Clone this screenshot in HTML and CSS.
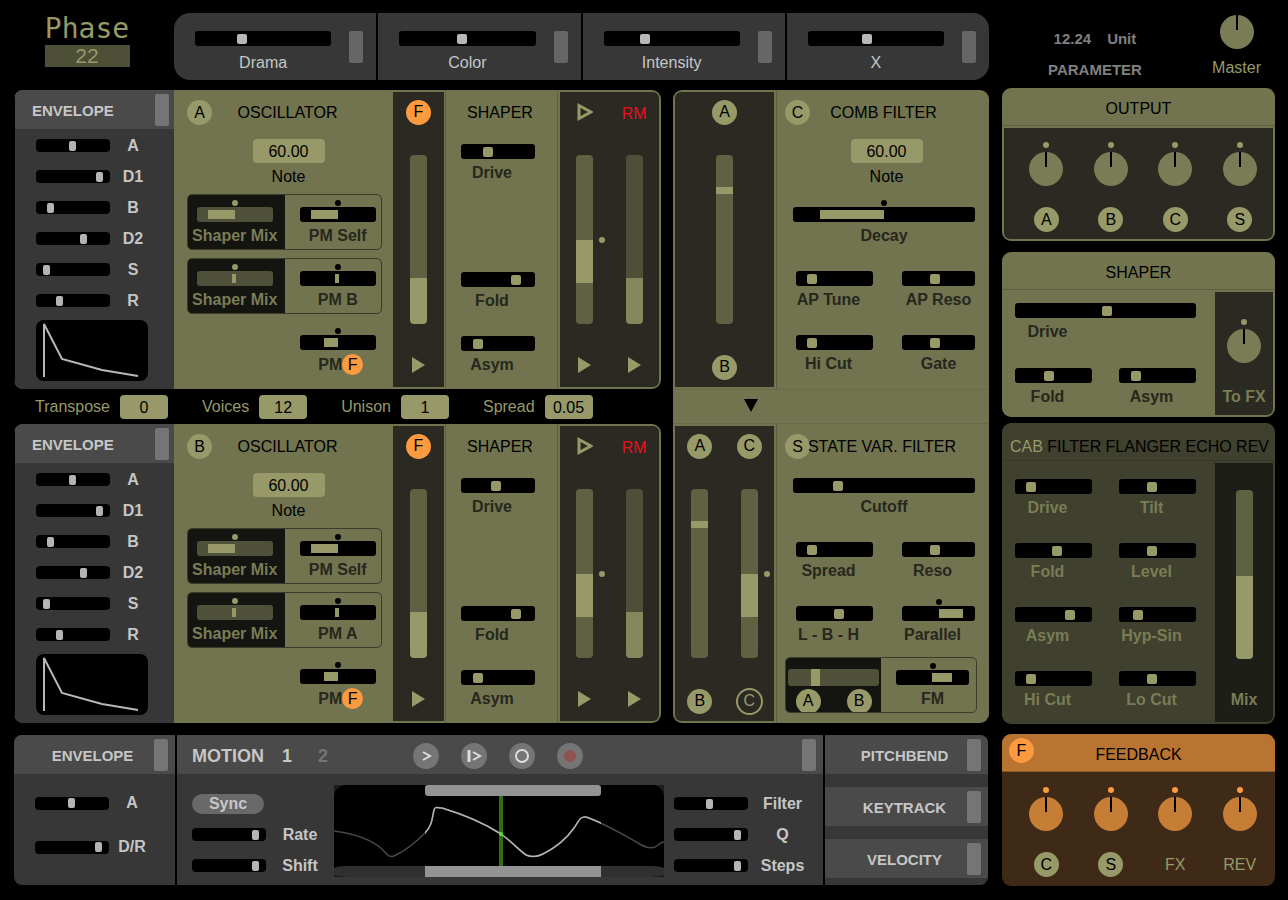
FILE: index.html
```html
<!DOCTYPE html>
<html lang="en">
<head>
    <meta charset="UTF-8">
    <meta name="viewport" content="width=device-width, initial-scale=1.0">
    <title>Phase 22</title>
    <link rel="stylesheet" href="styles.css">
</head>
<body>
    <div class="synth">
        <main class="main">
            <header class="top">
                <div class="logo">
                    <h1>Phase</h1>
                    <span>22</span>
                </div>
                <div class="macros">
                    <div class="macro">
                        <label><input type="range" value="33"><span>Drama</span></label>
                        <button class="toggle" aria-label="Drama modulation"></button>
                    </div>
                    <div class="macro">
                        <label><input type="range" value="46"><span>Color</span></label>
                        <button class="toggle" aria-label="Color modulation"></button>
                    </div>
                    <div class="macro">
                        <label><input type="range" value="29"><span>Intensity</span></label>
                        <button class="toggle" aria-label="Intensity modulation"></button>
                    </div>
                    <div class="macro">
                        <label><input type="range" value="43"><span>X</span></label>
                        <button class="toggle" aria-label="X modulation"></button>
                    </div>
                </div>
            </header>

            <div class="middle">
                <div class="voices">
                    <!-- Oscillator A -->
                    <section class="voice">
                        <div class="envelope">
                            <div class="bar"><h2>ENVELOPE</h2><button class="toggle" aria-label="Envelope A modulation"></button></div>
                            <div class="env-rows">
                                <label class="row"><input type="range" value="49"><span>A</span></label>
                                <label class="row"><input type="range" value="89"><span>D1</span></label>
                                <label class="row"><input type="range" value="16"><span>B</span></label>
                                <label class="row"><input type="range" value="66"><span>D2</span></label>
                                <label class="row"><input type="range" value="10"><span>S</span></label>
                                <label class="row"><input type="range" value="30"><span>R</span></label>
                            </div>
                            <svg class="env-graph" viewBox="0 0 112 61"><path d="M8 57V4L26 39L66 50L102 56"/></svg>
                        </div>
                        <div class="osc">
                            <div class="head"><span class="badge">A</span><h2>OSCILLATOR</h2></div>
                            <label class="note"><input type="text" value="60.00"><span>Note</span></label>
                            <div class="pairs">
                                <div class="pair">
                                    <label class="ctl off"><i class="dot"></i><input class="fill" type="range" value="15" style="--from: 15%; --to: 50%"><span>Shaper Mix</span></label>
                                    <label class="ctl"><i class="dot"></i><input class="fill" type="range" value="15" style="--from: 15%; --to: 50%"><span>PM Self</span></label>
                                </div>
                                <div class="pair">
                                    <label class="ctl off"><i class="dot"></i><input class="fill" type="range" value="50" style="--from: 46%; --to: 51%"><span>Shaper Mix</span></label>
                                    <label class="ctl"><i class="dot"></i><input class="fill" type="range" value="50" style="--from: 46%; --to: 51%"><span>PM B</span></label>
                                </div>
                                <div class="pair single">
                                    <label class="ctl"><i class="dot"></i><input class="fill" type="range" value="32" style="--from: 32%; --to: 50%"><span>PM<b class="badge small orange">F</b></span></label>
                                </div>
                            </div>
                        </div>
                        <div class="well send">
                            <div class="lane">
                                <span class="badge orange">F</span>
                                <input class="vert" type="range" value="27" style="--from: 0%; --to: 27%" aria-label="Feedback to A">
                                <svg class="arrow" viewBox="0 0 13 16"><path d="M0 0L13 8L0 16z"/></svg>
                            </div>
                        </div>
                        <div class="shaper">
                            <div class="head"><h2>SHAPER</h2></div>
                            <div class="ctls">
                                <label class="ctl"><input type="range" value="34"><span>Drive</span></label>
                                <label class="ctl low"><input type="range" value="78"><span>Fold</span></label>
                                <label class="ctl"><input type="range" value="18"><span>Asym</span></label>
                            </div>
                        </div>
                        <div class="well ring">
                            <div class="lane">
                                <svg class="play" viewBox="0 0 16 18"><path d="M2 2.500L14 9L2 15.500z"/></svg>
                                <span class="vbox"><input class="vert" type="range" value="25" style="--from: 24%; --to: 50%" aria-label="Direct level A"><i class="dot"></i></span>
                                <svg class="arrow" viewBox="0 0 13 16"><path d="M0 0L13 8L0 16z"/></svg>
                            </div>
                            <div class="lane dim">
                                <span class="rm">RM</span>
                                <input class="vert" type="range" value="27" style="--from: 0%; --to: 27%" aria-label="Ring modulation A">
                                <svg class="arrow" viewBox="0 0 13 16"><path d="M0 0L13 8L0 16z"/></svg>
                            </div>
                        </div>
                    </section>

                    <div class="globals">
                        <label><span>Transpose</span><input type="text" value="0"></label>
                        <label><span>Voices</span><input type="text" value="12"></label>
                        <label><span>Unison</span><input type="text" value="1"></label>
                        <label><span>Spread</span><input type="text" value="0.05"></label>
                    </div>

                    <!-- Oscillator B -->
                    <section class="voice">
                        <div class="envelope">
                            <div class="bar"><h2>ENVELOPE</h2><button class="toggle" aria-label="Envelope B modulation"></button></div>
                            <div class="env-rows">
                                <label class="row"><input type="range" value="49"><span>A</span></label>
                                <label class="row"><input type="range" value="89"><span>D1</span></label>
                                <label class="row"><input type="range" value="16"><span>B</span></label>
                                <label class="row"><input type="range" value="66"><span>D2</span></label>
                                <label class="row"><input type="range" value="10"><span>S</span></label>
                                <label class="row"><input type="range" value="30"><span>R</span></label>
                            </div>
                            <svg class="env-graph" viewBox="0 0 112 61"><path d="M8 57V4L26 39L66 50L102 56"/></svg>
                        </div>
                        <div class="osc">
                            <div class="head"><span class="badge">B</span><h2>OSCILLATOR</h2></div>
                            <label class="note"><input type="text" value="60.00"><span>Note</span></label>
                            <div class="pairs">
                                <div class="pair">
                                    <label class="ctl off"><i class="dot"></i><input class="fill" type="range" value="15" style="--from: 15%; --to: 50%"><span>Shaper Mix</span></label>
                                    <label class="ctl"><i class="dot"></i><input class="fill" type="range" value="15" style="--from: 15%; --to: 50%"><span>PM Self</span></label>
                                </div>
                                <div class="pair">
                                    <label class="ctl off"><i class="dot"></i><input class="fill" type="range" value="50" style="--from: 46%; --to: 51%"><span>Shaper Mix</span></label>
                                    <label class="ctl"><i class="dot"></i><input class="fill" type="range" value="50" style="--from: 46%; --to: 51%"><span>PM A</span></label>
                                </div>
                                <div class="pair single">
                                    <label class="ctl"><i class="dot"></i><input class="fill" type="range" value="32" style="--from: 32%; --to: 50%"><span>PM<b class="badge small orange">F</b></span></label>
                                </div>
                            </div>
                        </div>
                        <div class="well send">
                            <div class="lane">
                                <span class="badge orange">F</span>
                                <input class="vert" type="range" value="27" style="--from: 0%; --to: 27%" aria-label="Feedback to B">
                                <svg class="arrow" viewBox="0 0 13 16"><path d="M0 0L13 8L0 16z"/></svg>
                            </div>
                        </div>
                        <div class="shaper">
                            <div class="head"><h2>SHAPER</h2></div>
                            <div class="ctls">
                                <label class="ctl"><input type="range" value="47"><span>Drive</span></label>
                                <label class="ctl low"><input type="range" value="78"><span>Fold</span></label>
                                <label class="ctl"><input type="range" value="18"><span>Asym</span></label>
                            </div>
                        </div>
                        <div class="well ring">
                            <div class="lane">
                                <svg class="play" viewBox="0 0 16 18"><path d="M2 2.500L14 9L2 15.500z"/></svg>
                                <span class="vbox"><input class="vert" type="range" value="25" style="--from: 24%; --to: 50%" aria-label="Direct level B"><i class="dot"></i></span>
                                <svg class="arrow" viewBox="0 0 13 16"><path d="M0 0L13 8L0 16z"/></svg>
                            </div>
                            <div class="lane dim">
                                <span class="rm">RM</span>
                                <input class="vert" type="range" value="27" style="--from: 0%; --to: 27%" aria-label="Ring modulation B">
                                <svg class="arrow" viewBox="0 0 13 16"><path d="M0 0L13 8L0 16z"/></svg>
                            </div>
                        </div>
                    </section>
                </div>

                <!-- Filters -->
                <section class="filters">
                    <div class="filter">
                        <div class="well">
                            <div class="lane">
                                <span class="badge">A</span>
                                <input class="vert" type="range" value="78" style="--from: 77%; --to: 81%" aria-label="Comb input mix">
                                <span class="badge">B</span>
                            </div>
                        </div>
                        <div class="filter-body">
                            <div class="head"><span class="badge">C</span><h2>COMB FILTER</h2></div>
                            <label class="note"><input type="text" value="60.00"><span>Note</span></label>
                            <div class="ctls comb">
                                <label class="ctl wide"><i class="dot"></i><input class="fill" type="range" value="15" style="--from: 15%; --to: 50%"><span>Decay</span></label>
                                <label class="ctl"><input type="range" value="17"><span>AP Tune</span></label>
                                <label class="ctl mid"><input type="range" value="44"><span>AP Reso</span></label>
                                <label class="ctl"><input type="range" value="17"><span>Hi Cut</span></label>
                                <label class="ctl mid"><input type="range" value="44"><span>Gate</span></label>
                            </div>
                        </div>
                    </div>
                    <div class="link">
                        <svg viewBox="0 0 14 13"><path d="M0 0H14L7 13z"/></svg>
                    </div>
                    <div class="filter">
                        <div class="well">
                            <div class="lane">
                                <span class="badge">A</span>
                                <input class="vert" type="range" value="78" style="--from: 77%; --to: 81%" aria-label="State filter input mix">
                                <span class="badge">B</span>
                            </div>
                            <div class="lane">
                                <span class="badge">C</span>
                                <span class="vbox"><input class="vert" type="range" value="24" style="--from: 24%; --to: 50%" aria-label="Comb to state filter"><i class="dot"></i></span>
                                <span class="badge outline">C</span>
                            </div>
                        </div>
                        <div class="filter-body">
                            <div class="head"><span class="badge">S</span><h2>STATE VAR. FILTER</h2></div>
                            <div class="ctls state">
                                <label class="ctl wide"><input type="range" value="23"><span>Cutoff</span></label>
                                <label class="ctl"><input type="range" value="17"><span>Spread</span></label>
                                <label class="ctl"><input type="range" value="44"><span>Reso</span></label>
                                <label class="ctl"><input type="range" value="56"><span>L - B - H</span></label>
                                <label class="ctl"><i class="dot"></i><input class="fill" type="range" value="84" style="--from: 51%; --to: 84%"><span>Parallel</span></label>
                            </div>
                            <div class="pair">
                                <label class="ctl off ab"><input class="fill" type="range" value="30" style="--from: 25%; --to: 35%"><span><b class="badge">A</b><b class="badge">B</b></span></label>
                                <label class="ctl"><i class="dot"></i><input class="fill" type="range" value="77" style="--from: 49%; --to: 77%"><span>FM</span></label>
                            </div>
                        </div>
                    </div>
                </section>
            </div>

            <!-- Modulation -->
            <footer class="mods">
                <section class="mod-env">
                    <div class="bar"><h2>ENVELOPE</h2><button class="toggle" aria-label="Modulation envelope"></button></div>
                    <div class="env-rows">
                        <label class="row"><input type="range" value="49"><span>A</span></label>
                        <label class="row"><input type="range" value="90"><span>D/R</span></label>
                    </div>
                </section>
                <section class="motion">
                    <div class="bar">
                        <h2>MOTION</h2>
                        <div class="pages">
                            <button class="active">1</button>
                            <button>2</button>
                        </div>
                        <div class="transport">
                            <button aria-label="Play"><svg viewBox="0 0 26 26"><path d="M10 9L17 13L10 17"/></svg></button>
                            <button aria-label="Step"><svg viewBox="0 0 26 26"><path d="M8 7V19" stroke-width="3"/><path d="M12 9L19 13L12 17"/></svg></button>
                            <button aria-label="Loop"><svg viewBox="0 0 26 26"><circle cx="13" cy="13" r="6"/></svg></button>
                            <button aria-label="Record" class="record"><svg viewBox="0 0 26 26"><circle cx="13" cy="13" r="6"/></svg></button>
                        </div>
                        <button class="toggle" aria-label="Motion modulation"></button>
                    </div>
                    <div class="motion-body">
                        <div class="motion-rows">
                            <button class="sync">Sync</button>
                            <label class="row"><input type="range" value="90"><span>Rate</span></label>
                            <label class="row"><input type="range" value="89"><span>Shift</span></label>
                        </div>
                        <svg class="wave" viewBox="0 0 330 92" preserveAspectRatio="none">
                            <defs>
                                <clipPath id="range"><rect x="91" y="0" width="176" height="92"/></clipPath>
                                <path id="curve" d="M0 46C22 49 38 55 48 64C53 69 54 73 60 71C71 66 82 57 91 48C99 39 98 33 100 25C101 21 104 23 108 23C128 29 150 38 167 49C178 57 186 66 192 70C197 72 203 72 209 69C221 63 233 53 240 43C245 36 246 31 252 32C270 38 288 49 304 58C312 63 319 65 324 60Q327 57 330 57"/>
                            </defs>
                            <rect width="330" height="92" rx="12"/>
                            <path class="floor" d="M0 83Q4 81 12 81H318Q326 81 330 83V90L318 92H12L0 90z"/>
                            <rect class="grip" x="91" y="0" width="176" height="11" rx="3"/>
                            <rect class="grip" x="91" y="81" width="176" height="11"/>
                            <rect class="playhead" x="165" y="11" width="4" height="70"/>
                            <use class="curve-dim" href="#curve"/>
                            <use class="curve-lit" href="#curve" clip-path="url(#range)"/>
                            <circle class="spot" cx="167" cy="49" r="2"/>
                        </svg>
                        <div class="motion-rows">
                            <label class="row"><input type="range" value="48"><span>Filter</span></label>
                            <label class="row"><input type="range" value="89"><span>Q</span></label>
                            <label class="row"><input type="range" value="89"><span>Steps</span></label>
                        </div>
                    </div>
                </section>
                <section class="sources">
                    <div class="bar"><h2>PITCHBEND</h2><button class="toggle" aria-label="Pitchbend modulation"></button></div>
                    <div class="bar"><h2>KEYTRACK</h2><button class="toggle" aria-label="Keytrack modulation"></button></div>
                    <div class="bar"><h2>VELOCITY</h2><button class="toggle" aria-label="Velocity modulation"></button></div>
                </section>
            </footer>
        </main>

        <aside class="side">
            <div class="readout">
                <div class="param">
                    <p><span>12.24</span><span>Unit</span></p>
                    <p>PARAMETER</p>
                </div>
                <label class="master"><input class="knob" type="range"><span>Master</span></label>
            </div>

            <section class="panel output">
                <h2>OUTPUT</h2>
                <div class="well knobs">
                    <label><i class="dot"></i><input class="knob" type="range"><span class="badge">A</span></label>
                    <label><i class="dot"></i><input class="knob" type="range"><span class="badge">B</span></label>
                    <label><i class="dot"></i><input class="knob" type="range"><span class="badge">C</span></label>
                    <label><i class="dot"></i><input class="knob" type="range"><span class="badge">S</span></label>
                </div>
            </section>

            <section class="panel side-shaper">
                <h2>SHAPER</h2>
                <div class="split">
                    <div class="ctls">
                        <label class="ctl wide"><input type="range" value="51"><span>Drive</span></label>
                        <label class="ctl"><input type="range" value="43"><span>Fold</span></label>
                        <label class="ctl"><input type="range" value="18"><span>Asym</span></label>
                    </div>
                    <label class="well tofx"><i class="dot"></i><input class="knob" type="range"><span>To FX</span></label>
                </div>
            </section>

            <section class="panel fx">
                <nav>
                    <button class="active">CAB</button>
                    <button>FILTER</button>
                    <button>FLANGER</button>
                    <button>ECHO</button>
                    <button>REV</button>
                </nav>
                <div class="split">
                    <div class="ctls">
                        <label class="ctl"><input type="range" value="17"><span>Drive</span></label>
                        <label class="ctl"><input type="range" value="42"><span>Tilt</span></label>
                        <label class="ctl"><input type="range" value="55"><span>Fold</span></label>
                        <label class="ctl"><input type="range" value="42"><span>Level</span></label>
                        <label class="ctl"><input type="range" value="74"><span>Asym</span></label>
                        <label class="ctl"><input type="range" value="21"><span>Hyp-Sin</span></label>
                        <label class="ctl"><input type="range" value="17"><span>Hi Cut</span></label>
                        <label class="ctl"><input type="range" value="42"><span>Lo Cut</span></label>
                    </div>
                    <label class="well mix"><input class="vert" type="range" value="49" style="--from: 0%; --to: 49%"><span>Mix</span></label>
                </div>
            </section>

            <section class="panel feedback">
                <h2><span class="badge orange">F</span>FEEDBACK</h2>
                <div class="knobs">
                    <label><i class="dot"></i><input class="knob" type="range"><span class="badge">C</span></label>
                    <label><i class="dot"></i><input class="knob" type="range"><span class="badge">S</span></label>
                    <label><i class="dot"></i><input class="knob" type="range"><span>FX</span></label>
                    <label><i class="dot"></i><input class="knob" type="range"><span>REV</span></label>
                </div>
            </section>
        </aside>
    </div>
</body>
</html>
```
FILE: styles.css
```css
:root {
    --olive: #71744f;
    --olive-line: #5c5f42;
    --light: #979969;
    --well: #2a2a22;
    --grey: #373737;
    --grey-bar: #4a4a4a;
    --grey-text: #c6c6c6;
    --orange: #fc9a3f;
}

* {
    box-sizing: border-box;
}

body {
    margin: 0;
    background: #000;
    font-family: "Liberation Sans", Arial, sans-serif;
    font-size: 16px;
    line-height: 20px;
    color: #000;
}

h1, h2, p {
    margin: 0;
    font-size: 16px;
    font-weight: normal;
}

button {
    padding: 0;
    border: none;
    background: none;
    font: inherit;
    color: inherit;
    cursor: pointer;
}

input {
    margin: 0;
    min-width: 0;
}

input[type="text"] {
    height: 24px;
    padding: 2px 0 0;
    border: none;
    border-radius: 4px;
    background: var(--light);
    font: inherit;
    color: #000;
    text-align: center;
}

/* sliders */
input[type="range"] {
    appearance: none;
    display: block;
    width: 100%;
    height: 15px;
    border-radius: 3px;
    background: #000;
    cursor: pointer;
}

input[type="range"]::-webkit-slider-thumb {
    appearance: none;
    width: 10px;
    height: 10px;
    border-radius: 2px;
    background: var(--light);
}

input.fill::-webkit-slider-thumb,
input.vert::-webkit-slider-thumb,
input.knob::-webkit-slider-thumb {
    opacity: 0;
}

input[type="range"].fill {
    background: linear-gradient(90deg, transparent var(--from), var(--light) var(--from), var(--light) var(--to), transparent var(--to)) center / 100% 9px no-repeat, #000;
}

input[type="range"].vert {
    writing-mode: vertical-lr;
    direction: rtl;
    width: 17px;
    height: 169px;
    border-radius: 4px;
    background: linear-gradient(0deg, transparent var(--from), var(--light) var(--from), var(--light) var(--to), transparent var(--to)), #5e6142;
}

input[type="range"].knob {
    width: 34px;
    height: 34px;
    border-radius: 50%;
    background: linear-gradient(#000, #000) center top / 2px 15px no-repeat, #7a7c56;
}

.toggle {
    flex: none;
    width: 14px;
    height: 32px;
    border-radius: 2px;
    background: #757575;
}

.badge {
    display: flex;
    flex: none;
    align-items: center;
    justify-content: center;
    width: 25px;
    height: 25px;
    border-radius: 50%;
    background: var(--light);
    font-weight: normal;
    color: #000;
}

.badge.small {
    width: 21px;
    height: 21px;
}

.badge.orange {
    background: var(--orange);
}

.badge.outline {
    width: 27px;
    height: 27px;
    border: 2px solid var(--light);
    background: none;
    color: var(--light);
}

.dot {
    display: block;
    width: 6px;
    height: 6px;
    border-radius: 50%;
    background: var(--light);
}

/* slider with a marker above and a name below */
.ctl {
    display: grid;
    grid-template-rows: 9px 15px 27px;
    grid-template-columns: minmax(0, 1fr);
    align-items: center;
    font-weight: bold;
    color: #27271d;
}

.ctl .dot {
    grid-row: 1;
    justify-self: center;
    background: #000;
}

.ctl input {
    grid-row: 2;
}

.ctl > span {
    display: flex;
    grid-row: 3;
    align-items: center;
    justify-content: center;
    white-space: nowrap;
}

.ctls .ctl > span {
    padding-right: 12px;
}

.ctls .ctl.mid > span,
.ctls .ctl.wide > span {
    padding-right: 0;
}

.ctls {
    display: grid;
    row-gap: 13px;
}

/* page */
.synth {
    display: grid;
    grid-template-columns: minmax(0, 975fr) minmax(0, 273fr);
    gap: 13px;
    padding: 13px 13px 14px 14px;
}

.main, .side {
    display: flex;
    flex-direction: column;
}

.top {
    display: grid;
    grid-template-columns: 160px 1fr;
    margin-bottom: 10px;
}

.logo {
    display: flex;
    flex-direction: column;
    align-items: center;
    padding-right: 14px;
}

.logo h1 {
    font: 28px/32px "DejaVu Sans Mono", monospace;
    color: var(--light);
}

.logo span {
    width: 85px;
    background: #4d4f37;
    font-size: 21px;
    line-height: 22px;
    text-align: center;
    color: var(--light);
}

.macros {
    display: grid;
    grid-template-columns: repeat(4, 1fr);
    gap: 2px;
    overflow: hidden;
    border-radius: 16px;
}

.macro {
    display: flex;
    gap: 18px;
    padding: 18px 13px 7px 21px;
    background: var(--grey);
    color: var(--grey-text);
}

.macro label {
    flex: 1;
    text-align: center;
}

.macro label span {
    display: block;
    margin-top: 7px;
}

.macro input[type="range"]::-webkit-slider-thumb {
    background: #b8b8b8;
}

.macro .toggle {
    background: #666;
}

.middle {
    display: grid;
    grid-template-columns: minmax(0, 647fr) minmax(0, 316fr);
    gap: 12px;
}

/* grey parts */
.bar {
    display: flex;
    align-items: center;
    height: 39px;
    padding: 0 5px 0 17px;
    background: var(--grey-bar);
    color: var(--grey-text);
}

.bar h2 {
    flex: 1;
    padding-top: 3px;
    font-size: 15px;
    font-weight: bold;
}

.env-rows {
    display: grid;
    grid-auto-rows: 31px;
}

.row {
    display: grid;
    grid-template-columns: 74px 1fr;
    align-items: center;
    font-weight: bold;
    text-align: center;
    color: var(--grey-text);
}

.row input[type="range"] {
    height: 13px;
    border-radius: 4px;
}

.row input[type="range"]::-webkit-slider-thumb {
    width: 7px;
    background: #b4b4b4;
}

/* voices */
.voice {
    display: grid;
    grid-template-columns: minmax(0, 160fr) minmax(0, 218fr) 53px minmax(0, 113fr) 103px;
    overflow: hidden;
    border-radius: 9px;
    background: var(--olive);
}

.envelope {
    padding-bottom: 8px;
    border-left: 1px solid #000;
    background: var(--grey);
}

.envelope .env-rows {
    padding: 1px 18px 0 21px;
}

.env-graph {
    display: block;
    width: 112px;
    margin: 4px 0 0 21px;
    border-radius: 8px;
    background: #000;
}

.env-graph path {
    fill: none;
    stroke: #b8b8b8;
    stroke-width: 2;
}

.head {
    display: flex;
    align-items: center;
    height: 45px;
}

.head h2 {
    flex: 1;
    text-align: center;
    white-space: nowrap;
}

.osc {
    padding: 0 10px 0 13px;
}

.osc .head h2 {
    padding-right: 19px;
}

.note {
    display: flex;
    flex-direction: column;
    gap: 4px;
    align-items: center;
    padding: 4px 0 0 8px;
}

.note input[type="text"] {
    width: 72px;
}

.pairs {
    display: grid;
    gap: 8px;
    margin-top: 7px;
}

.pair {
    display: grid;
    grid-template-columns: minmax(0, 1fr) minmax(0, 1fr);
    overflow: hidden;
    border: 1px solid #3b3c29;
    border-radius: 5px;
}

.pair .ctl {
    padding: 3px 5px 0 15px;
}

.pair .ctl.off {
    padding: 3px 12px 0 9px;
    background: #141410;
    color: #7a7c56;
}

.pair .off .dot {
    background: var(--light);
}

.pair .off input[type="range"].fill {
    background-color: #4f513a;
}

.pair.single {
    border-color: transparent;
}

.pair.single .ctl {
    grid-column: 2;
}

.pair.single .ctl > span {
    padding: 2px 0 0 6px;
}

.well {
    display: flex;
    margin: 2px;
    background: var(--well);
}

.send {
    justify-content: center;
    margin: 2px 1px;
}

.lane {
    display: grid;
    flex: 1;
    grid-template-rows: 40px 1fr 40px;
    align-items: center;
    justify-items: center;
}

.arrow {
    width: 13px;
    margin-bottom: 4px;
    fill: var(--light);
}

.play {
    width: 16px;
    fill: none;
    stroke: var(--light);
    stroke-width: 3;
}

.vbox {
    position: relative;
}

/* centre marker beside a two-way slider */
.vbox .dot {
    position: absolute;
    top: 82px;
    left: 23px;
}

.rm {
    padding-top: 3px;
    color: #f00a1e;
}

.dim input[type="range"].vert {
    --light: #84865b;
    background-color: #4e4f38;
}

.shaper {
    padding: 0 22px 0 15px;
    border-right: 1px solid var(--olive-line);
    border-left: 1px solid var(--olive-line);
}

.shaper .head {
    margin-right: -4px;
}

.shaper .low {
    margin-top: 64px;
}

.ring {
    border-radius: 0 6px 6px 0;
}

.globals {
    display: flex;
    gap: 34px;
    align-items: center;
    height: 35px;
    padding-left: 21px;
    color: var(--light);
}

.globals label {
    display: flex;
    gap: 10px;
    align-items: center;
}

.globals input[type="text"] {
    width: 48px;
}

/* filters */
.filters {
    display: flex;
    flex-direction: column;
    border-radius: 9px;
    background: var(--olive);
}

.filter {
    display: grid;
    flex: 1;
    grid-template-columns: 103px minmax(0, 1fr);
}

.filter .well {
    border-radius: 6px 0 0 0;
}

.link + .filter .well {
    border-radius: 0 0 0 6px;
}

.filter-body {
    padding: 0 12px 0 8px;
    border-left: 1px solid var(--olive-line);
}

.filter-body .head h2 {
    padding-right: 20px;
}

.link + .filter .head h2 {
    margin-left: -7px;
    padding-right: 16px;
}

.filter-body .note {
    padding-left: 11px;
}

.filter-body .ctls {
    grid-template-columns: 77fr 73fr;
    column-gap: 29px;
    padding: 0 2px 0 11px;
}

.filter-body .ctls .wide {
    grid-column: span 2;
    margin-left: -3px;
}

.filter-body .ctls.comb {
    margin-top: 11px;
}

.filter-body .pair {
    margin-top: 9px;
}

.filter-body .pair .ctl {
    padding: 3px 7px 0 15px;
}

.filter-body .pair .ab {
    padding: 3px 2px 0;
}

.pair .ab input[type="range"].fill {
    height: 17px;
    background-size: 100% 100%;
}

.ab > span {
    gap: 26px;
    padding-top: 5px;
}

.link {
    display: flex;
    justify-content: center;
    height: 35px;
    padding: 9px 160px 0 0;
    border-top: 1px solid #6a6d4a;
    border-bottom: 1px solid #676a48;
}

.link svg {
    width: 14px;
    height: 13px;
}

/* modulation */
.mods {
    display: grid;
    grid-template-columns: minmax(0, 161fr) minmax(0, 646fr) minmax(0, 163fr);
    gap: 2px;
    overflow: hidden;
    margin: 12px 1px 0 0;
    border-radius: 8px;
}

.mods > section {
    padding-bottom: 4px;
    background: var(--grey);
}

.mods .bar {
    padding-right: 7px;
}

.mod-env .bar h2 {
    text-align: center;
}

.mod-env .env-rows {
    grid-auto-rows: 44px;
    padding: 7px 20px 0 21px;
}

.motion .bar {
    padding-left: 15px;
}

.motion .bar h2 {
    flex: none;
    font-size: 18px;
}

.pages {
    display: flex;
    gap: 26px;
    margin-left: 18px;
    padding-top: 3px;
    font-size: 18px;
    font-weight: bold;
    color: #757575;
}

.pages .active {
    color: var(--grey-text);
}

.transport {
    display: flex;
    gap: 22px;
    margin: 3px auto 0 85px;
}

.transport button {
    width: 26px;
    height: 26px;
    border-radius: 50%;
    background: #757575;
}

.transport svg {
    display: block;
    fill: none;
    stroke: #ddd;
    stroke-width: 2;
}

.transport .record svg {
    fill: #8f5252;
    stroke: none;
}

.motion-body {
    display: grid;
    grid-template-columns: 142px minmax(0, 1fr) 142px;
    align-items: start;
    padding: 11px 6px 0 15px;
}

.motion-rows {
    display: grid;
    grid-auto-rows: 31px;
    align-items: center;
    padding-top: 3px;
}

.wave + .motion-rows {
    margin-left: -1px;
}

.sync {
    width: 72px;
    height: 20px;
    border-radius: 10px;
    background: #696969;
    font-weight: bold;
    color: var(--grey-text);
}

.wave {
    display: block;
    width: calc(100% - 11px);
    height: 92px;
    background: #1c1c1c;
}

.wave .floor {
    fill: #303030;
}

.wave .grip {
    fill: #939393;
}

.wave .playhead {
    fill: #2c6e14;
}

.wave .spot {
    fill: #5be02c;
}

.wave use {
    fill: none;
    stroke-width: 1.5;
}

.curve-dim {
    stroke: #484848;
}

.curve-lit {
    stroke: #b4b4b4;
}

.sources {
    display: flex;
    flex-direction: column;
    gap: 13px;
}

.sources .bar h2 {
    text-align: center;
}

/* right side */
.readout {
    display: flex;
    justify-content: space-between;
    padding: 2px 14px 0 46px;
}

.param {
    padding-top: 14px;
}

.param p {
    display: flex;
    gap: 16px;
    justify-content: center;
    margin-bottom: 11px;
    font-size: 15px;
    font-weight: bold;
    color: #808080;
}

.master {
    display: grid;
    gap: 9px;
    align-content: start;
    justify-items: center;
    color: var(--light);
}

.side {
    gap: 11px;
}

.panel {
    border-radius: 9px;
    background: var(--olive);
}

.panel h2 {
    display: grid;
    place-items: center;
    height: 38px;
    padding-top: 4px;
    border-bottom: 1px solid var(--olive-line);
}

.panel .well {
    border-radius: 0 0 6px 6px;
}

.knobs {
    display: grid;
    grid-template-columns: repeat(4, 1fr);
    padding: 14px 1px 7px 10px;
}

.knobs label {
    display: grid;
    grid-template-rows: 6px 34px 42px;
    row-gap: 4px;
    justify-items: center;
    color: var(--light);
}

.knobs label > span {
    align-self: end;
    height: 25px;
    line-height: 26px;
}

.output {
    margin-top: -14px;
}

.split {
    display: grid;
    grid-template-columns: minmax(0, 211fr) minmax(0, 62fr);
}

.split .ctls {
    grid-template-columns: 1fr 1fr;
    row-gap: 14px;
    column-gap: 27px;
    padding: 4px 17px 7px 13px;
}

.split .wide {
    grid-column: span 2;
}

.split .ctls .ctl.wide > span {
    padding-right: 116px;
}

.split .well {
    flex-direction: column;
    gap: 4px;
    align-items: center;
    border-radius: 0 0 6px 0;
    font-weight: bold;
    color: #7a7c56;
}

.tofx {
    padding-top: 27px;
}

.tofx span {
    margin-top: 20px;
    white-space: nowrap;
}

.fx {
    margin-top: -5px;
    background: #3f402d;
}

.fx nav {
    display: flex;
    align-items: flex-end;
    justify-content: space-between;
    height: 38px;
    padding: 0 6px 3px 8px;
    border-bottom: 1px solid #37382a;
}

.fx nav .active {
    color: var(--light);
}

.fx .ctls {
    row-gap: 13px;
    padding: 9px 17px 11px 13px;
}

.fx .ctl {
    color: #7a7c56;
}

.fx .well {
    background: #1e1e18;
}

.mix {
    padding-top: 27px;
}

.mix span {
    margin-top: 27px;
}

.feedback {
    overflow: hidden;
    margin-top: -1px;
    background: #3f2a17;
}

.feedback h2 {
    position: relative;
    border-color: #8a5726;
    background: #b87430;
}

.feedback h2 .badge {
    position: absolute;
    top: 4px;
    left: 7px;
}

.feedback .knobs {
    padding: 15px 3px 9px 12px;
}

.feedback .dot {
    background: var(--orange);
}

.feedback input[type="range"].knob {
    background-color: #c67d35;
}
```
